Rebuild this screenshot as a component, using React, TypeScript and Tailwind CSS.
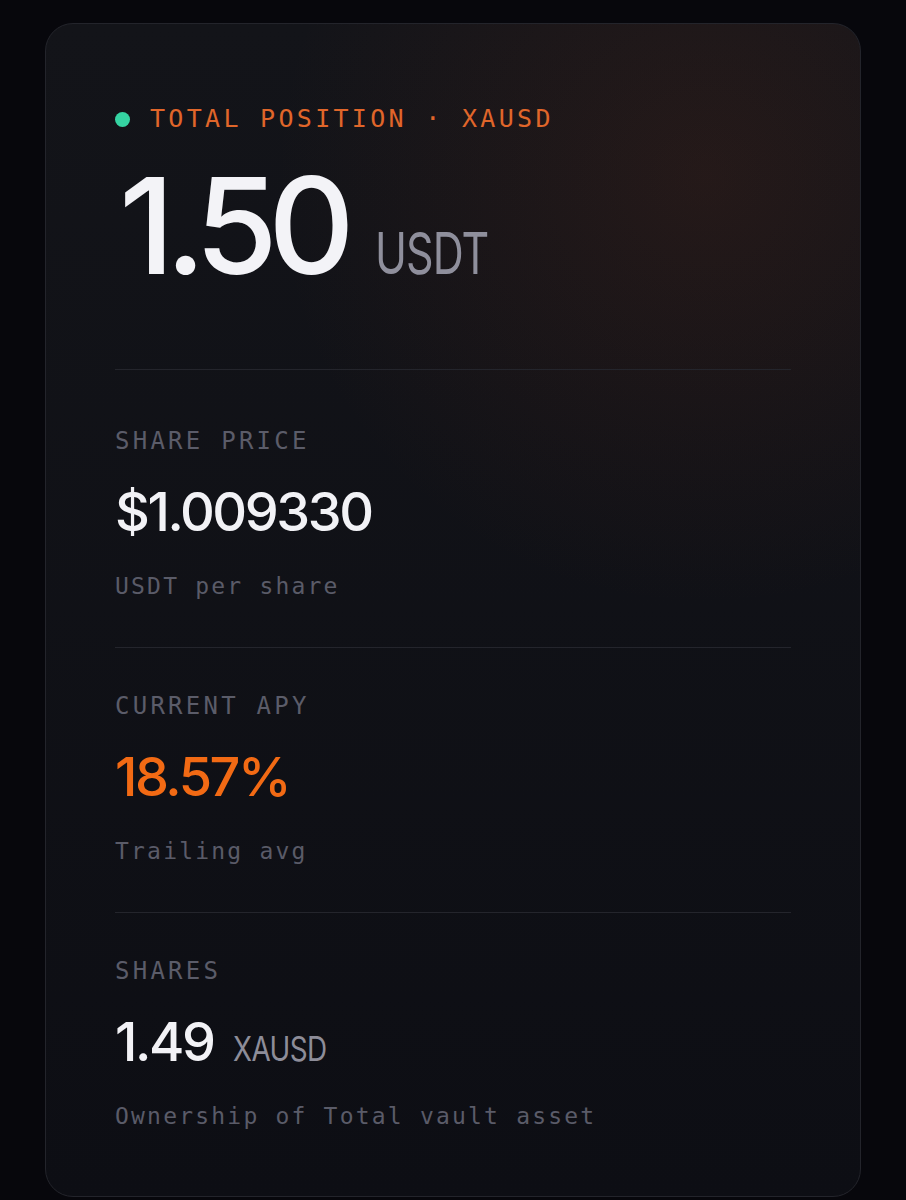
import React from "react";

interface Stat {
  label: string;
  value: string;
  unit?: string;
  note: string;
  accent?: boolean;
}

const stats: Stat[] = [
  { label: "SHARE PRICE", value: "$1.009330", note: "USDT per share" },
  { label: "CURRENT APY", value: "18.57%", note: "Trailing avg", accent: true },
  { label: "SHARES", value: "1.49", unit: "XAUSD", note: "Ownership of Total vault asset" },
];

const mono = "font-['DejaVu_Sans_Mono','Liberation_Mono',monospace]";
const sans = "font-['Inter','Roboto',sans-serif]";

function StatBlock({ stat, first }: { stat: Stat; first: boolean }) {
  return (
    <div className={first ? "pt-[59px] pb-[49px]" : "pt-[46px] pb-[49px]"}>
      <div className={`${mono} text-[24px] leading-[24px] tracking-[3.25px] text-[#5b5c69]`}>
        {stat.label}
      </div>
      <div className="mt-[32px] flex items-baseline">
        <span
          className={`${sans} text-[54px] font-medium leading-none tracking-[-0.045em] ${
            stat.accent ? "text-[#f26a14]" : "text-[#f2f2f6]"
          }`}
        >
          {stat.value}
        </span>
        {stat.unit && (
          <span className={`${sans} ml-[19px] origin-left scale-x-[0.82] text-[34px] leading-none tracking-[-0.02em] text-[#8d8d99]`}>
            {stat.unit}
          </span>
        )}
      </div>
      <div className={`${mono} mt-[36px] text-[23px] leading-[23px] tracking-[2.2px] text-[#5a5b68]`}>
        {stat.note}
      </div>
    </div>
  );
}

export default function App() {
  return (
    <div className="min-h-screen bg-[#07070c] pt-[23px] pl-[45px]">
      <div className="relative h-[1174px] w-[816px] overflow-hidden rounded-[28px] border border-[#23242b] bg-gradient-to-b from-[#131419] to-[#0d0e14]">
        {/* warm glow, top right */}
        <div className="pointer-events-none absolute inset-0 bg-[radial-gradient(circle_at_81%_13%,rgba(150,62,28,0.14),transparent_430px)]" />

        <div className="relative px-[69px] pt-[83px]">
          <div className="flex items-center">
            <span className="h-[15px] w-[15px] rounded-full bg-[#35d3a2]" />
            <span className={`${mono} ml-[20px] text-[25px] leading-[24px] tracking-[3.3px] text-[#e0662a]`}>
              TOTAL POSITION · XAUSD
            </span>
          </div>

          <div className="mt-[27px] flex items-baseline">
            <span className={`${sans} ml-[4px] text-[134px] font-medium leading-none tracking-[-0.07em] text-[#f3f3f7]`}>1.50</span>
            <span className={`${sans} ml-[29px] origin-left scale-x-[0.74] text-[58px] leading-none tracking-[-0.02em] text-[#8f8f9c]`}>USDT</span>
          </div>

          <div className="mt-[77px] h-px bg-[#24252c]" />

          {stats.map((s, i) => (
            <React.Fragment key={s.label}>
              <StatBlock stat={s} first={i === 0} />
              {i < stats.length - 1 && <div className="h-px bg-[#24252c]" />}
            </React.Fragment>
          ))}
        </div>
      </div>
    </div>
  );
}
